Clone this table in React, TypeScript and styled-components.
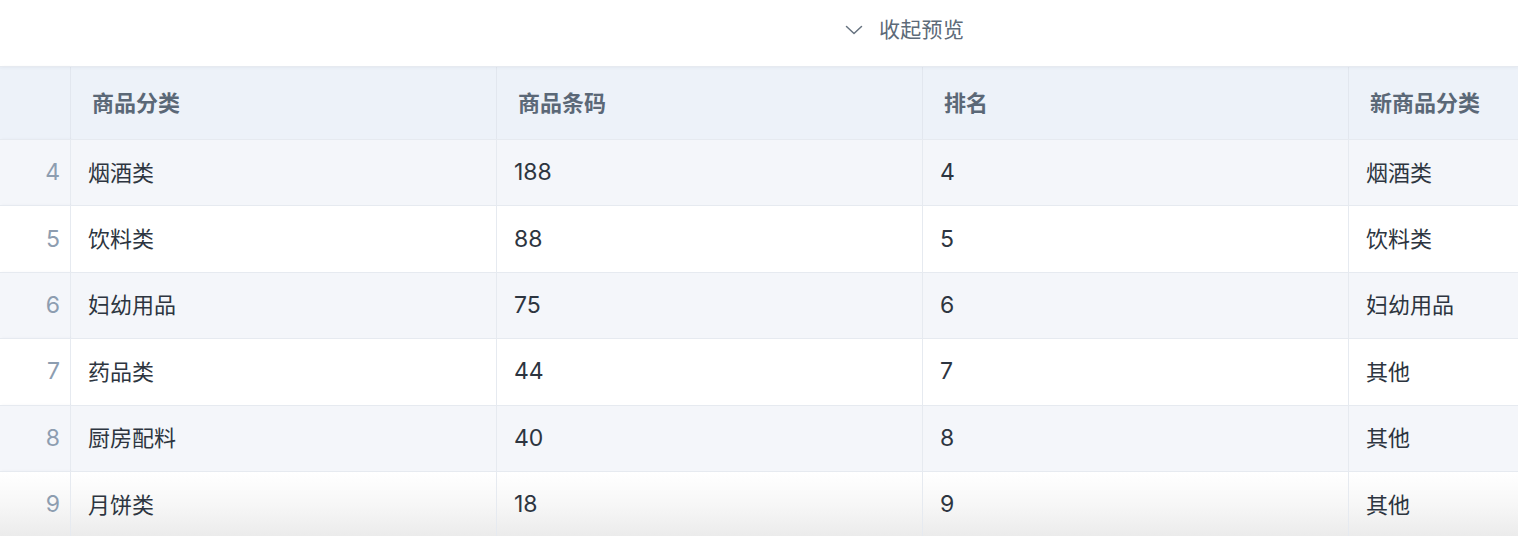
import styled, { createGlobalStyle } from "styled-components";

const GlobalStyle = createGlobalStyle`
  html, body {
    margin: 0;
    padding: 0;
    background: #ffffff;
    font-family: Inter, "Noto Sans CJK SC", sans-serif;
    overflow: hidden;
  }
`;

const Page = styled.div`
  width: 1518px;
  height: 536px;
  overflow: hidden;
  display: flex;
  flex-direction: column;
`;

const TopBar = styled.div`
  height: 67px;
  box-sizing: border-box;
  flex-shrink: 0;
  display: flex;
  align-items: center;
  padding: 0 0 7px 845px;
  gap: 16px;
  border-bottom: 1px solid #e6eaf0;
  box-shadow: 0 1px 3px rgba(30, 50, 80, 0.05);
  position: relative;
  z-index: 2;
`;

const Toggle = styled.span`
  font-size: 21px;
  line-height: 1;
  color: #5d6a78;
  letter-spacing: 0.3px;
`;

const Table = styled.div`
  display: grid;
  grid-template-columns: 70px 426px 426px 426px 300px;
  width: 1648px;
`;

const HeadCell = styled.div<{ first?: boolean }>`
  height: 72px;
  display: flex;
  align-items: center;
  padding-left: 21px;
  background: #edf2f9;
  border-left: ${p => (p.first ? "none" : "1px solid #e2e7ef")};
  font-size: 22px;
  line-height: 1;
  font-weight: bold;
  color: #5b6877;
  box-shadow: ${p => (p.first ? "2px 0 3px rgba(40, 60, 90, 0.05)" : "none")};
`;

const Cell = styled.div<{ stripe: boolean; last: boolean; index?: boolean }>`
  height: 66.4px;
  box-sizing: border-box;
  display: flex;
  align-items: center;
  justify-content: ${p => (p.index ? "flex-end" : "flex-start")};
  padding: ${p => (p.index ? "0 10px 0 0" : "0 0 0 17px")};
  border-top: 1px solid #e6eaf0;
  border-left: ${p => (p.index ? "none" : "1px solid #e6eaf0")};
  background: ${p =>
    p.last
      ? "linear-gradient(to bottom, #ffffff 0%, #f7f7f7 50%, #ebebeb 100%)"
      : p.stripe
      ? "#f4f6fa"
      : "#ffffff"};
  font-size: 22px;
  line-height: 1;
  color: ${p => (p.index ? "#8d9db0" : "#2d3540")};
  box-shadow: ${p => (p.index ? "2px 0 3px rgba(40, 60, 90, 0.04)" : "none")};
  white-space: nowrap;
`;

const Num = styled.span`
  font-size: 23px;
  font-weight: 400;
`;

const columns = ["商品分类", "商品条码", "排名", "新商品分类"];

const rows = [
  { n: 4, cat: "烟酒类", code: "188", rank: "4", next: "烟酒类" },
  { n: 5, cat: "饮料类", code: "88", rank: "5", next: "饮料类" },
  { n: 6, cat: "妇幼用品", code: "75", rank: "6", next: "妇幼用品" },
  { n: 7, cat: "药品类", code: "44", rank: "7", next: "其他" },
  { n: 8, cat: "厨房配料", code: "40", rank: "8", next: "其他" },
  { n: 9, cat: "月饼类", code: "18", rank: "9", next: "其他" },
];

const Chevron = () => (
  <svg width="18" height="10" viewBox="0 0 18 10" fill="none">
    <path d="M1.5 1.5 L9 8.5 L16.5 1.5" stroke="#66727f" strokeWidth="1.5" strokeLinecap="round" strokeLinejoin="round" />
  </svg>
);

export default function App() {
  return (
    <Page>
      <GlobalStyle />
      <TopBar>
        <Chevron />
        <Toggle>收起预览</Toggle>
      </TopBar>
      <Table>
        <HeadCell first />
        {columns.map(c => (
          <HeadCell key={c}>{c}</HeadCell>
        ))}
        {rows.map((r, i) => {
          const stripe = i % 2 === 0;
          const last = i === rows.length - 1;
          return [
            <Cell key={r.n + "i"} index stripe={stripe} last={last}><Num>{r.n}</Num></Cell>,
            <Cell key={r.n + "a"} stripe={stripe} last={last}>{r.cat}</Cell>,
            <Cell key={r.n + "b"} stripe={stripe} last={last}><Num>{r.code}</Num></Cell>,
            <Cell key={r.n + "c"} stripe={stripe} last={last}><Num>{r.rank}</Num></Cell>,
            <Cell key={r.n + "d"} stripe={stripe} last={last}>{r.next}</Cell>,
          ];
        })}
      </Table>
    </Page>
  );
}
